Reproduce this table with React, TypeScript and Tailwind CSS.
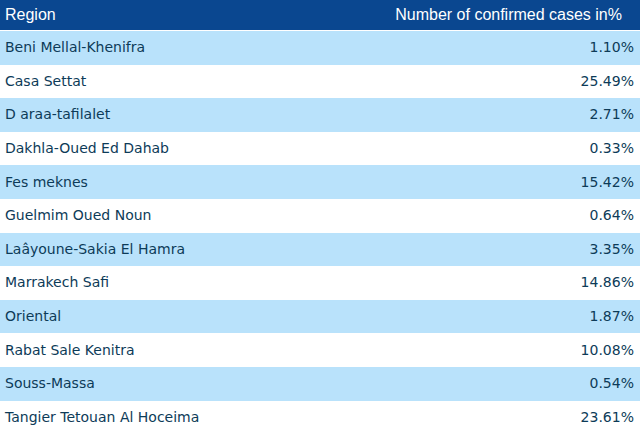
import React from 'react';

const rows = [
  { region: 'Beni Mellal-Khenifra', value: '1.10%' },
  { region: 'Casa Settat', value: '25.49%' },
  { region: 'D araa-tafilalet', value: '2.71%' },
  { region: 'Dakhla-Oued Ed Dahab', value: '0.33%' },
  { region: 'Fes meknes', value: '15.42%' },
  { region: 'Guelmim Oued Noun', value: '0.64%' },
  { region: 'Laâyoune-Sakia El Hamra', value: '3.35%' },
  { region: 'Marrakech Safi', value: '14.86%' },
  { region: 'Oriental', value: '1.87%' },
  { region: 'Rabat Sale Kenitra', value: '10.08%' },
  { region: 'Souss-Massa', value: '0.54%' },
  { region: 'Tangier Tetouan Al Hoceima', value: '23.61%' },
];

const App = () => {
  return (
    <div className="w-[640px] h-[439px] bg-white overflow-hidden">
      {/* Header */}
      <div className="h-[30px] bg-[#0a4790] flex items-center justify-between pl-[5px] pr-[18px] text-white text-[16px] font-['Liberation_Sans',Arial,sans-serif]">
        <span>Region</span>
        <span>Number of confirmed cases in%</span>
      </div>

      {/* Rows */}
      <div className="mt-px flex flex-col">
        {rows.map((r, i) => (
          <div
            key={r.region}
            className={`h-[33.6px] flex items-center justify-between pl-[5px] pr-[6px] text-[14px] text-[#0d3b58] font-['DejaVu_Sans',Tahoma,sans-serif] ${
              i % 2 === 0 ? 'bg-[#b9e2fb]' : 'bg-white'
            }`}
          >
            <span>{r.region}</span>
            <span>{r.value}</span>
          </div>
        ))}
      </div>
    </div>
  );
};

export default App;
